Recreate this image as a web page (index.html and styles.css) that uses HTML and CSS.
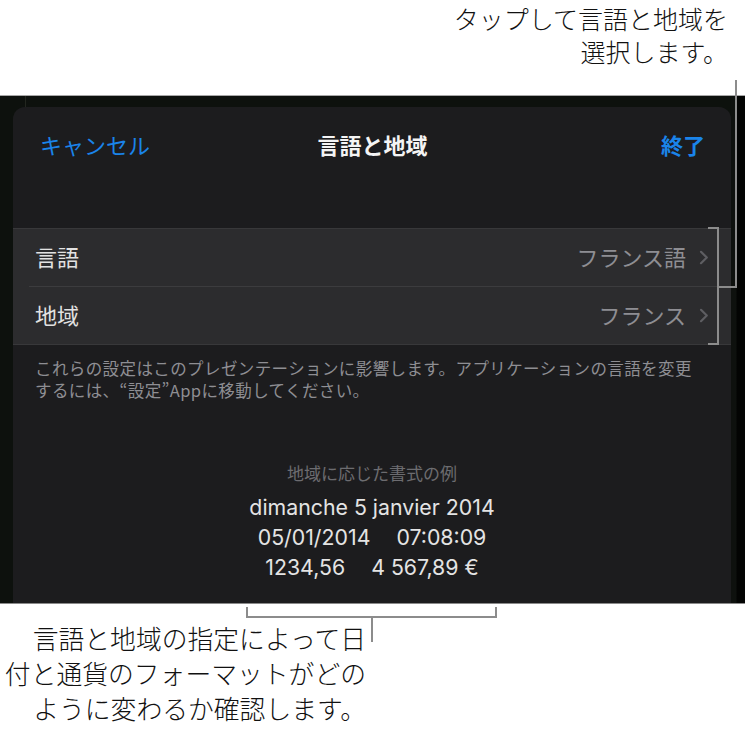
FILE: index.html
```html
<!DOCTYPE html>
<html lang="ja">
<head>
<meta charset="utf-8">
<title>言語と地域</title>
<link rel="stylesheet" href="styles.css">
</head>
<body>
<div class="page">
  <div class="callout-top">タップして言語と地域を<br>選択します。</div>

  <div class="shot">
    <div class="strip-left"></div>
    <div class="sheet">
      <div class="nav">
        <span class="cancel">キャンセル</span>
        <span class="title">言語と地域</span>
        <span class="done">終了</span>
      </div>
      <div class="group">
        <div class="row">
          <span class="label">言語</span>
          <span class="value">フランス語</span>
          <svg class="chev" width="10" height="15" viewBox="0 0 10 15"><path d="M2 1.8 L7.8 7.5 L2 13.2" fill="none" stroke="#5e5e62" stroke-width="2.2" stroke-linecap="round" stroke-linejoin="round"/></svg>
        </div>
        <div class="sep"></div>
        <div class="row">
          <span class="label">地域</span>
          <span class="value">フランス</span>
          <svg class="chev" width="10" height="15" viewBox="0 0 10 15"><path d="M2 1.8 L7.8 7.5 L2 13.2" fill="none" stroke="#5e5e62" stroke-width="2.2" stroke-linecap="round" stroke-linejoin="round"/></svg>
        </div>
      </div>
      <div class="note">
        <div class="note-line">これらの設定はこのプレゼンテーションに影響します。アプリケーションの言語を変更</div>
        <div class="note-line">するには、“設定”Appに移動してください。</div>
      </div>
      <div class="example">
        <div class="ex-head">地域に応じた書式の例</div>
        <div class="ex-line">dimanche 5 janvier 2014</div>
        <div class="ex-line"><span>05/01/2014</span><span>07:08:09</span></div>
        <div class="ex-line"><span>1234,56</span><span>4 567,89 €</span></div>
      </div>
    </div>
    <div class="strip-right"></div>
  </div>

  <div class="callout-bottom">言語と地域の指定によって日<br>付と通貨のフォーマットがどの<br>ように変わるか確認します。</div>

  <div class="ln ln-top-v"></div>
  <div class="ln ln-top-h"></div>
  <div class="ln ln-br-v"></div>
  <div class="ln ln-br-t"></div>
  <div class="ln ln-br-b"></div>
  <div class="ln ln-bot-h"></div>
  <div class="ln ln-bot-l"></div>
  <div class="ln ln-bot-r"></div>
  <div class="ln ln-bot-c"></div>
</div>
</body>
</html>
```

FILE: styles.css
```css
html, body {
  margin: 0;
  padding: 0;
  background: #ffffff;
}
body {
  font-family: "Noto Sans CJK JP", "Noto Sans", sans-serif;
}
.page {
  position: relative;
  width: 745px;
  height: 732px;
  overflow: hidden;
}
.callout-top {
  height: 95px;
  box-sizing: border-box;
  padding: 2px 17px 0 0;
  text-align: right;
  font-size: 25px;
  font-weight: 300;
  line-height: 33px;
  color: #111;
}
.shot {
  display: flex;
  height: 509px;
  box-sizing: border-box;
  border-top: 1px solid #a8a8a8;
  border-bottom: 1px solid #8a8a8a;
  background: #0d110d;
}
.strip-left {
  width: 13px;
  flex: none;
  position: relative;
}
.strip-left::after {
  content: "";
  position: absolute;
  left: 25px;
  top: 0;
  width: 1px;
  height: 11px;
  background: #22261f;
}
.strip-right {
  flex: 1;
  background: linear-gradient(to right, #0e110e 0 5px, #030403 6px);
}
.sheet {
  width: 718px;
  flex: none;
  margin-top: 11px;
  background: #1c1c1e;
  border-radius: 12px 12px 0 0;
  position: relative;
}
.nav {
  display: grid;
  grid-template-columns: 1fr auto 1fr;
  align-items: center;
  padding: 24px 26px 2px 27px;
  height: 26px;
  font-size: 22px;
  line-height: 26px;
}
.cancel { color: #1a84ea; }
.title { color: #f4f4f4; font-weight: 700; }
.done { color: #1a84ea; font-weight: 700; justify-self: end; }

.group {
  margin-top: 69px;
  background: #2c2c2e;
  border-top: 1px solid #38383a;
  border-bottom: 1px solid #38383a;
}
.row {
  display: flex;
  align-items: center;
  height: 57px;
  box-sizing: border-box;
  padding: 0 22px 3px 22px;
  font-size: 22px;
}
.sep {
  height: 1px;
  margin-left: 16px;
  background: #3c3c3e;
}
.label { color: #e2e2e2; flex: 1; }
.value { color: #8e8e93; }
.chev { margin-left: 13px; flex: none; margin-top: 2px; }

.note {
  margin: 12px 0 0;
  padding: 0 0 0 22px;
  white-space: nowrap;
  font-size: 16.5px;
  color: #8e8e93;
  display: flex;
  flex-direction: column;
}
.note-line {
  height: 22px;
  line-height: 22px;
  letter-spacing: 0.4px;
}
.example {
  margin-top: 61px;
  text-align: center;
}
.ex-head {
  font-size: 17px;
  line-height: 22px;
  color: #6c6c70;
  margin-bottom: 8px;
}
.ex-line {
  display: flex;
  justify-content: center;
  gap: 26px;
  font-family: "Inter", "Liberation Sans", sans-serif;
  font-size: 21.3px;
  line-height: 30px;
  color: #e4e4e4;
}
.callout-bottom {
  width: 366px;
  margin-top: 16px;
  text-align: right;
  font-size: 25.8px;
  font-weight: 300;
  line-height: 35px;
  color: #111;
}
.ln {
  position: absolute;
  background: #8c8c8c;
}
.ln-top-v { left: 735px; top: 80px; width: 2px; height: 208px; }
.ln-top-h { left: 718px; top: 286px; width: 19px; height: 2px; }
.ln-br-v { left: 717px; top: 227px; width: 2px; height: 118px; }
.ln-br-t { left: 708px; top: 227px; width: 10px; height: 2px; }
.ln-br-b { left: 708px; top: 343px; width: 10px; height: 2px; }
.ln-bot-h { left: 246px; top: 616px; width: 251px; height: 2px; }
.ln-bot-l { left: 246px; top: 607px; width: 2px; height: 10px; }
.ln-bot-r { left: 495px; top: 607px; width: 2px; height: 10px; }
.ln-bot-c { left: 371px; top: 617px; width: 2px; height: 25px; }
```
